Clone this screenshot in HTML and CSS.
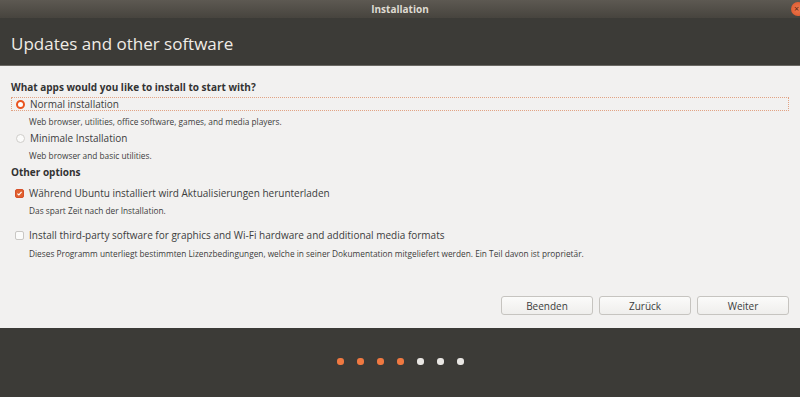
FILE: index.html
```html
<!DOCTYPE html>
<html lang="de">

<head>
    <meta charset="UTF-8">
    <meta name="viewport" content="width=device-width, initial-scale=1.0">
    <title>Installation</title>
    <link rel="stylesheet" href="styles.css">
</head>

<body>
    <div class="window">
        <div class="titlebar">
            <span class="wintitle">Installation</span>
            <span class="close">×</span>
        </div>
        <div class="header">
            <h1>Updates and other software</h1>
        </div>
        <div class="content">
            <p class="question">What apps would you like to install to start with?</p>
            <div class="option focus">
                <span class="radio on"></span>
                <label>Normal installation</label>
            </div>
            <p class="desc">Web browser, utilities, office software, games, and media players.</p>
            <div class="option">
                <span class="radio"></span>
                <label>Minimale Installation</label>
            </div>
            <p class="desc">Web browser and basic utilities.</p>
            <p class="question other">Other options</p>
            <div class="option check-row">
                <span class="check on">
                    <svg width="9" height="9" viewBox="0 0 9 9"><path d="M1.8 4.6 L3.7 6.4 L7.2 2.4" fill="none" stroke="#fff" stroke-width="1.5"/></svg>
                </span>
                <label>Während Ubuntu installiert wird Aktualisierungen herunterladen</label>
            </div>
            <p class="desc">Das spart Zeit nach der Installation.</p>
            <div class="option check-row second">
                <span class="check"></span>
                <label>Install third-party software for graphics and Wi-Fi hardware and additional media formats</label>
            </div>
            <p class="desc last">Dieses Programm unterliegt bestimmten Lizenzbedingungen, welche in seiner Dokumentation mitgeliefert werden. Ein Teil davon ist proprietär.</p>
            <div class="buttons">
                <button>Beenden</button>
                <button>Zurück</button>
                <button>Weiter</button>
            </div>
        </div>
        <div class="footer">
            <span class="dot done"></span>
            <span class="dot done"></span>
            <span class="dot done"></span>
            <span class="dot done"></span>
            <span class="dot"></span>
            <span class="dot"></span>
            <span class="dot"></span>
        </div>
    </div>
</body>

</html>
```

FILE: styles.css
```css
* {
    box-sizing: border-box;
}

body {
    margin: 0;
    font-family: "Open Sans", "DejaVu Sans", sans-serif;
    background: #3c3b37;
}

.window {
    width: 800px;
    height: 397px;
    display: flex;
    flex-direction: column;
    overflow: hidden;
}

.titlebar {
    height: 18px;
    background: linear-gradient(#5d5952, #47443e);
    display: flex;
    align-items: center;
    justify-content: center;
    position: relative;
}

.wintitle {
    color: #dfdbd2;
    font-size: 10px;
    font-weight: bold;
}

.close {
    position: absolute;
    right: -5px;
    top: 2px;
    width: 14px;
    height: 14px;
    border-radius: 50%;
    background: radial-gradient(#f07a4e, #d9532a);
    color: #5a2412;
    font-size: 9px;
    line-height: 14px;
    text-indent: 3px;
}

.header {
    height: 48px;
    background: #3c3b37;
    border-bottom: 1px solid #6b6964;
    padding: 14px 11px 0;
}

.header h1 {
    margin: 0;
    color: #f0ece6;
    font-size: 17px;
    font-weight: normal;
    line-height: 24px;
}

.content {
    height: 262px;
    background: #f2f1f0;
    padding: 14px 11px 0;
    color: #3c3c3c;
}

.question {
    margin: 0 0 2px;
    font-size: 10px;
    font-weight: bold;
    line-height: 15px;
    color: #333;
}

.other {
    margin-top: 4px;
}

.option {
    display: flex;
    align-items: center;
    gap: 5px;
    height: 14px;
    padding-left: 2px;
    font-size: 10px;
    color: #3c3c3c;
}

.focus {
    border: 1px dotted #e2a384;
}

.radio {
    width: 9px;
    height: 9px;
    border-radius: 50%;
    border: 1px solid #cfcdca;
    background: #fbfbfa;
    margin-left: 3px;
}

.radio.on {
    border: 2.5px solid #e95420;
    background: #fff;
    margin-left: 2px;
}

.check {
    width: 9px;
    height: 9px;
    border: 1px solid #c9c7c4;
    border-radius: 2px;
    background: #fbfbfa;
    display: flex;
    align-items: center;
    justify-content: center;
    margin-left: 2px;
}

.check.on {
    border-color: #d7502a;
    background: #e0612f;
}

.check-row {
    margin-top: 6px;
}

.check-row.second {
    margin-top: 12px;
}

.desc {
    margin: 5px 0 4px 18px;
    font-size: 8.3px;
    line-height: 11px;
    color: #3c3c3c;
}

.desc.last {
    margin-top: 6px;
}

.buttons {
    display: flex;
    justify-content: flex-end;
    gap: 6px;
    margin-top: 37px;
}

.buttons button {
    width: 92px;
    height: 19px;
    font-family: inherit;
    font-size: 10px;
    color: #3c3c3c;
    border: 1px solid #c6c4c0;
    border-radius: 3px;
    background: linear-gradient(#fbfbfa, #efeeec);
}

.footer {
    flex: 1;
    background: #3c3b37;
    display: flex;
    justify-content: center;
    align-items: center;
    gap: 13px;
    padding-bottom: 3px;
}

.dot {
    width: 7px;
    height: 7px;
    border-radius: 3px;
    background: #e8e6e3;
}

.dot.done {
    background: #f07941;
}
```
